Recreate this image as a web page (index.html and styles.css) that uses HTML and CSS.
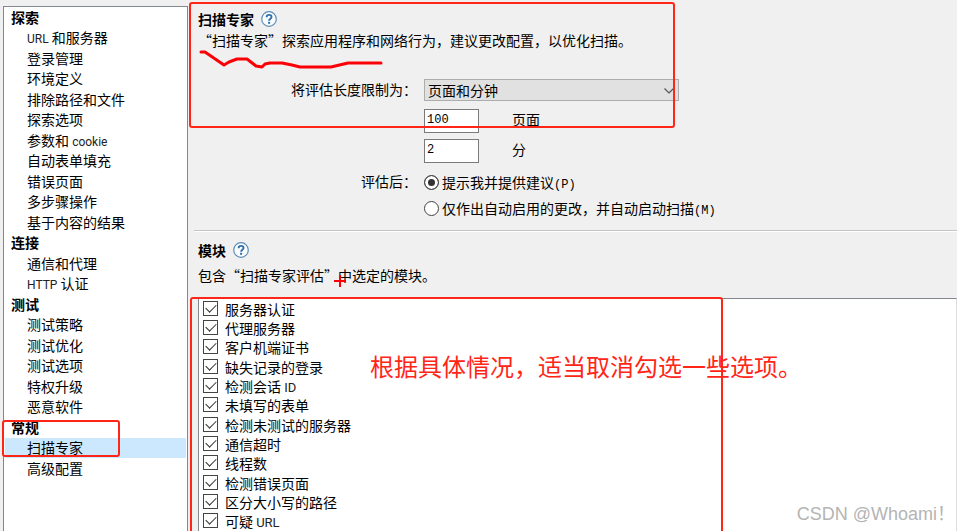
FILE: index.html
```html
<!DOCTYPE html>
<html lang="zh-CN">
<head>
    <meta charset="UTF-8">
    <meta name="viewport" content="width=device-width, initial-scale=1.0">
    <title>扫描配置 - 扫描专家</title>
    <link rel="stylesheet" href="styles.css">
</head>
<body>
    <div class="window">
        <nav class="sidebar">
            <ul class="nav-list">
                <li class="nav-group">探索</li>
                <li><a href="#"><span class="latin">URL</span> 和服务器</a></li>
                <li><a href="#">登录管理</a></li>
                <li><a href="#">环境定义</a></li>
                <li><a href="#">排除路径和文件</a></li>
                <li><a href="#">探索选项</a></li>
                <li><a href="#">参数和 <span class="latin">cookie</span></a></li>
                <li><a href="#">自动表单填充</a></li>
                <li><a href="#">错误页面</a></li>
                <li><a href="#">多步骤操作</a></li>
                <li><a href="#">基于内容的结果</a></li>
                <li class="nav-group">连接</li>
                <li><a href="#">通信和代理</a></li>
                <li><a href="#"><span class="latin">HTTP</span> 认证</a></li>
                <li class="nav-group">测试</li>
                <li><a href="#">测试策略</a></li>
                <li><a href="#">测试优化</a></li>
                <li><a href="#">测试选项</a></li>
                <li><a href="#">特权升级</a></li>
                <li><a href="#">恶意软件</a></li>
                <li class="nav-group">常规</li>
                <li><a href="#" class="active">扫描专家</a></li>
                <li><a href="#">高级配置</a></li>
            </ul>
        </nav>

        <main class="content">
            <section class="panel">
                <h2 class="panel-title">
                    扫描专家
                    <svg class="help-icon" viewBox="0 0 16 16">
                        <circle cx="8" cy="8" r="7.3" fill="#fafcfe" stroke="#5b8db8" stroke-width="1.2"/>
                        <path d="M5.6 6.2C5.6 3.1 10.5 3.1 10.5 6C10.5 7.7 8.1 7.8 8.1 9.8" fill="none" stroke="#2f6fa8" stroke-width="1.9"/>
                        <rect x="7.1" y="10.8" width="2" height="2" fill="#2f6fa8"/>
                    </svg>
                </h2>
                <p class="panel-text">“扫描专家”探索应用程序和网络行为，建议更改配置，以优化扫描。</p>

                <form class="settings">
                    <label class="field-label" for="limit">将评估长度限制为：</label>
                    <div class="select-box">
                        <select id="limit">
                            <option>页面和分钟</option>
                        </select>
                        <svg class="select-arrow" viewBox="0 0 10 6">
                            <path d="M0.5 0.5L5 5L9.5 0.5" fill="none" stroke="#555" stroke-width="1.2"/>
                        </svg>
                    </div>

                    <div class="field-row">
                        <input type="text" id="pages" value="100">
                        <label for="pages">页面</label>
                    </div>

                    <div class="field-row">
                        <input type="text" id="minutes" value="2">
                        <label for="minutes">分</label>
                    </div>

                    <span class="field-label after-label" id="afterLabel">评估后：</span>
                    <div class="radio-group" role="radiogroup" aria-labelledby="afterLabel">
                        <label><input type="radio" name="after" checked><span>提示我并提供建议<span class="mono">(P)</span></span></label>
                        <label><input type="radio" name="after"><span>仅作出自动启用的更改，并自动启动扫描<span class="mono">(M)</span></span></label>
                    </div>
                </form>
            </section>

            <section class="panel modules">
                <h2 class="panel-title">
                    模块
                    <svg class="help-icon" viewBox="0 0 16 16">
                        <circle cx="8" cy="8" r="7.3" fill="#fafcfe" stroke="#5b8db8" stroke-width="1.2"/>
                        <path d="M5.6 6.2C5.6 3.1 10.5 3.1 10.5 6C10.5 7.7 8.1 7.8 8.1 9.8" fill="none" stroke="#2f6fa8" stroke-width="1.9"/>
                        <rect x="7.1" y="10.8" width="2" height="2" fill="#2f6fa8"/>
                    </svg>
                </h2>
                <p class="panel-text">包含“扫描专家评估”中选定的模块。</p>

                <ul class="module-list">
                    <li><label><input type="checkbox" checked>服务器认证</label></li>
                    <li><label><input type="checkbox" checked>代理服务器</label></li>
                    <li><label><input type="checkbox" checked>客户机端证书</label></li>
                    <li><label><input type="checkbox" checked>缺失记录的登录</label></li>
                    <li><label><input type="checkbox" checked><span>检测会话 <span class="latin">ID</span></span></label></li>
                    <li><label><input type="checkbox" checked>未填写的表单</label></li>
                    <li><label><input type="checkbox" checked>检测未测试的服务器</label></li>
                    <li><label><input type="checkbox" checked>通信超时</label></li>
                    <li><label><input type="checkbox" checked>线程数</label></li>
                    <li><label><input type="checkbox" checked>检测错误页面</label></li>
                    <li><label><input type="checkbox" checked>区分大小写的路径</label></li>
                    <li><label><input type="checkbox" checked><span>可疑 <span class="latin">URL</span></span></label></li>
                </ul>
            </section>
        </main>

        <!-- 红色标注 -->
        <div class="mark mark-expert"></div>
        <div class="mark mark-nav"></div>
        <div class="mark mark-modules"></div>
        <svg class="scribble" viewBox="0 0 184 20">
            <path d="M2 3L6 3L25 16L30 13L38 10L48 10L57 17L63 18L66 15L71 14L83 14L93 16L101 18L132 18L149 14L182 14" fill="none" stroke="#fb0007" stroke-width="3" stroke-linecap="round" stroke-linejoin="round"/>
        </svg>
        <svg class="cross" viewBox="0 0 12 12">
            <path d="M6 0V12M0 6H12" stroke="#fb0007" stroke-width="2"/>
        </svg>
        <p class="note">根据具体情况，适当取消勾选一些选项。</p>
        <p class="watermark">CSDN @Whoami！</p>
    </div>
</body>
</html>
```

FILE: styles.css
```css
:root {
    --bg-color: #f0f0f0;
    --text-color: #000;
    --border-color: #828790;
    --selected-bg: #cce8ff;
    --mark-color: #ff2618;
}

* {
    margin: 0;
    padding: 0;
    box-sizing: border-box;
}

body {
    background-color: var(--bg-color);
    color: var(--text-color);
    font-family: "Noto Sans CJK SC", sans-serif;
    font-size: 14px;
    line-height: 20px;
}

.window {
    position: relative;
    display: flex;
    gap: 6px;
    height: 100vh;
    padding-left: 3px;
    overflow: hidden;
}

.latin {
    font-family: Roboto, sans-serif;
    font-size: 12px;
    line-height: 12px;
    color: #222;
}

.mono {
    font-family: "Liberation Mono", monospace;
    font-size: 12px;
    line-height: 12px;
}

ul {
    list-style: none;
}

/* Sidebar */
.sidebar {
    flex: 0 0 185px;
    margin-top: 6px;
    padding: 1px;
    background-color: #fff;
    border: 1px solid var(--border-color);
    border-bottom: none;
}

.nav-list {
    line-height: 18px;
}

.nav-list li {
    height: 20px;
}

.nav-list li:nth-child(even) {
    height: 21px;
}

.nav-group {
    padding-left: 6px;
    font-weight: bold;
}

.nav-list a {
    display: block;
    height: 20px;
    padding-left: 22px;
    color: inherit;
    text-decoration: none;
}

.nav-list a.active {
    background-color: var(--selected-bg);
}

/* Content */
.content {
    flex: 1;
    display: flex;
    flex-direction: column;
    min-width: 0;
}

.panel {
    padding: 9px 0 9px 4px;
}

.panel-title {
    display: flex;
    align-items: center;
    gap: 7px;
    font-size: 14px;
}

.help-icon {
    width: 16px;
    height: 16px;
}

.panel-text {
    line-height: 22px;
}

.settings {
    display: grid;
    grid-template-columns: 219px 1fr;
    gap: 6px 7px;
    margin-top: 28px;
}

.field-label {
    text-align: right;
}

.after-label {
    line-height: 24px;
}

.select-box {
    position: relative;
    width: 255px;
    height: 24px;
}

select {
    appearance: none;
    display: block;
    width: 100%;
    height: 22px;
    padding: 0 3px;
    border: 1px solid #adadad;
    border-radius: 0;
    background-color: #e1e1e1;
    color: inherit;
    font: inherit;
}

.select-arrow {
    position: absolute;
    top: 9px;
    right: 5px;
    width: 10px;
    height: 6px;
}

.field-row {
    grid-column: 2;
    display: flex;
    gap: 33px;
}

input[type="text"] {
    width: 55px;
    height: 24px;
    padding: 0 2px 2px;
    border: 1px solid #7a7a7a;
    background-color: #fff;
    font-family: "Liberation Mono", monospace;
    font-size: 12px;
}

.radio-group label {
    display: flex;
    align-items: center;
    height: 26px;
}

input[type="radio"] {
    appearance: none;
    width: 15px;
    height: 15px;
    margin-right: 3px;
    border: 1px solid #444;
    border-radius: 50%;
    background-color: #fff;
}

input[type="radio"]:checked {
    background-color: #333;
    box-shadow: inset 0 0 0 3px #fff;
}

/* Modules */
.modules {
    flex: 1;
    display: flex;
    flex-direction: column;
    padding-bottom: 0;
    border-top: 1px solid #c4c4c4;
    box-shadow: inset 0 1px 0 #fff;
}

.modules .panel-text {
    margin-top: 4px;
}

.module-list {
    flex: 1;
    margin-top: 12px;
    padding: 0 4px;
    background-color: #fff;
    border: 1px solid var(--border-color);
    border-right-color: #ddd;
    border-bottom: none;
    line-height: 18px;
}

.module-list li {
    height: 19px;
}

.module-list li:nth-child(3n) {
    height: 20px;
}

.module-list label {
    display: flex;
    align-items: center;
    gap: 7px;
    height: 19px;
}

.module-list .latin {
    font-size: 13px;
}

input[type="checkbox"] {
    appearance: none;
    position: relative;
    width: 15px;
    height: 15px;
    border: 1px solid #444;
    background-color: #fff;
}

input[type="checkbox"]:checked::after {
    content: "";
    position: absolute;
    top: 2px;
    left: 2px;
    width: 9px;
    height: 5px;
    border-left: 1px solid #333;
    border-bottom: 1px solid #333;
    transform: rotate(-45deg);
}

/* Annotations */
.mark {
    position: absolute;
    border: 2px solid var(--mark-color);
    border-radius: 3px;
    pointer-events: none;
}

.mark-expert {
    top: 2px;
    left: 189px;
    width: 486px;
    height: 126px;
}

.mark-nav {
    top: 420px;
    left: 2px;
    width: 118px;
    height: 37px;
}

.mark-modules {
    top: 297px;
    bottom: -4px;
    left: 190px;
    width: 533px;
}

.scribble {
    position: absolute;
    top: 49px;
    left: 199px;
    width: 184px;
    height: 20px;
}

.cross {
    position: absolute;
    top: 275px;
    left: 334px;
    width: 12px;
    height: 12px;
}

.note {
    position: absolute;
    top: 348px;
    left: 370px;
    color: var(--mark-color);
    font-size: 24px;
    line-height: 36px;
    white-space: nowrap;
}

.watermark {
    position: absolute;
    right: 2px;
    bottom: 5px;
    color: #b4b4b4;
    font-family: "Liberation Sans", "Noto Sans CJK SC", sans-serif;
    font-size: 18px;
    line-height: 24px;
    white-space: nowrap;
}
```
